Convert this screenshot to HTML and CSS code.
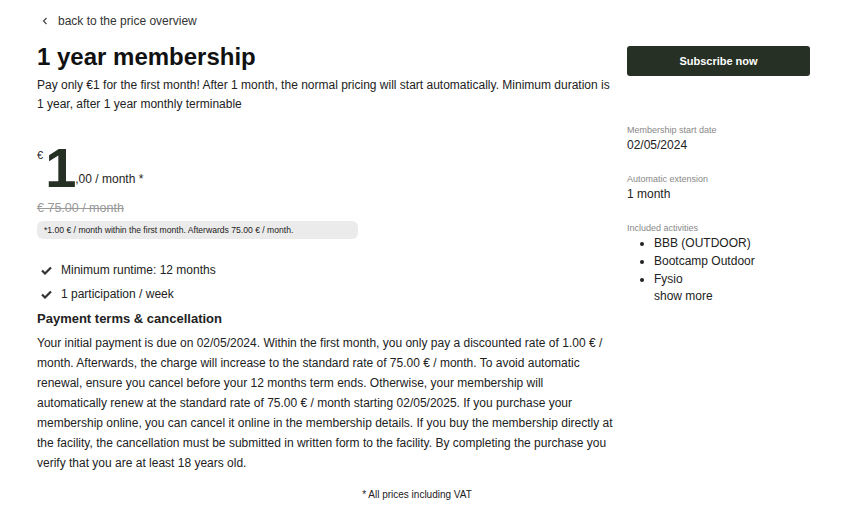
FILE: index.html
```html
<!DOCTYPE html>
<html lang="en">
  <head>
    <meta charset="UTF-8" />
    <title>1 year membership</title>
    <link rel="stylesheet" href="styles.css">
  </head>
  <body>
    <div class="page">
      <div class="main">
        <a class="back" href="#">
          <svg width="8" height="8" viewBox="0 0 8 8"><polyline points="5.5,1 2.5,4 5.5,7" fill="none" stroke="#444" stroke-width="1.2"/></svg>
          back to the price overview
        </a>
        <h1>1 year membership</h1>
        <p class="intro">Pay only €1 for the first month! After 1 month, the normal pricing will start automatically. Minimum duration is 1 year, after 1 year monthly terminable</p>

        <div class="price">
          <span class="cur">€</span>
          <span class="big">1</span>
          <span class="rest">,00 / month *</span>
        </div>
        <div class="old">€ 75.00 / month</div>
        <div class="note">*1.00 € / month within the first month. Afterwards 75.00 € / month.</div>

        <ul class="checks">
          <li>
            <svg width="11" height="9" viewBox="0 0 11 9"><path d="M1 4.5 L4 7.5 L10 1.5" fill="none" stroke="#333" stroke-width="2.2"/></svg>
            Minimum runtime: 12 months
          </li>
          <li>
            <svg width="11" height="9" viewBox="0 0 11 9"><path d="M1 4.5 L4 7.5 L10 1.5" fill="none" stroke="#333" stroke-width="2.2"/></svg>
            1 participation / week
          </li>
        </ul>

        <h2>Payment terms &amp; cancellation</h2>
        <p class="terms">Your initial payment is due on 02/05/2024. Within the first month, you only pay a discounted rate of 1.00 € / month. Afterwards, the charge will increase to the standard rate of 75.00 € / month. To avoid automatic renewal, ensure you cancel before your 12 months term ends. Otherwise, your membership will automatically renew at the standard rate of 75.00 € / month starting 02/05/2025. If you purchase your membership online, you can cancel it online in the membership details. If you buy the membership directly at the facility, the cancellation must be submitted in written form to the facility. By completing the purchase you verify that you are at least 18 years old.</p>
      </div>

      <aside class="side">
        <button type="button">Subscribe now</button>
        <div class="label first">Membership start date</div>
        <div class="value">02/05/2024</div>
        <div class="label">Automatic extension</div>
        <div class="value">1 month</div>
        <div class="label">Included activities</div>
        <ul class="acts">
          <li>BBB (OUTDOOR)</li>
          <li>Bootcamp Outdoor</li>
          <li>Fysio</li>
        </ul>
        <a class="more" href="#">show more</a>
      </aside>
    </div>
    <p class="vat">* All prices including VAT</p>
  </body>
</html>
```

FILE: styles.css
```css
body {
  margin: 0;
  font-family: "Liberation Sans", Arial, sans-serif;
  color: #222;
  background: #fff;
}
.page {
  display: grid;
  grid-template-columns: 1fr 183px;
  gap: 12px;
  padding: 13px 46px 0 37px;
}
.back {
  display: flex;
  align-items: center;
  gap: 9px;
  padding-left: 4px;
  font-size: 12px;
  line-height: 16px;
  color: #333;
  text-decoration: none;
}
h1 {
  margin: 14px 0 5px;
  font-size: 24px;
  line-height: 28px;
  color: #111;
}
.intro {
  margin: 0;
  font-size: 12px;
  line-height: 19px;
}
.price {
  display: flex;
  align-items: flex-start;
  margin-top: 25px;
}
.cur {
  font-size: 11px;
  line-height: 12px;
  margin-top: 10px;
}
.big {
  font-size: 56px;
  font-weight: bold;
  line-height: 57px;
  color: #263024;
  margin: 0 -1px 0 2px;
}
.rest {
  font-size: 12px;
  line-height: 14px;
  margin-top: 33px;
}
.old {
  margin-top: 5px;
  font-size: 12.5px;
  color: #999;
  text-decoration: line-through;
}
.note {
  margin-top: 6px;
  width: 321px;
  box-sizing: border-box;
  padding: 3px 7px;
  background: #ebebeb;
  border-radius: 6px;
  font-size: 8.6px;
  line-height: 12px;
}
.checks {
  list-style: none;
  margin: 19px 0 0;
  padding: 0 0 0 4px;
}
.checks li {
  display: flex;
  align-items: center;
  gap: 9px;
  font-size: 12px;
  line-height: 24px;
}
h2 {
  margin: 3px 0 0;
  font-size: 13px;
  line-height: 20px;
}
.terms {
  margin: 4px 0 0;
  font-size: 12px;
  line-height: 20px;
}
.side {
  padding-top: 33px;
}
.side button {
  width: 100%;
  height: 30px;
  background: #263024;
  color: #fff;
  border: none;
  border-radius: 3px;
  font-family: inherit;
  font-size: 11px;
  font-weight: bold;
  cursor: pointer;
}
.label {
  margin-top: 19px;
  font-size: 9px;
  line-height: 13px;
  color: #888;
}
.label.first {
  margin-top: 48px;
}
.value {
  font-size: 12px;
  line-height: 17px;
}
.acts {
  margin: -1px 0 0;
  padding-left: 27px;
  font-size: 12px;
  line-height: 18px;
}
.more {
  display: block;
  padding-left: 27px;
  font-size: 12px;
  line-height: 17px;
  color: #222;
  text-decoration: none;
}
.vat {
  margin: 16px 0 0;
  padding-right: 22px;
  text-align: center;
  font-size: 10px;
  color: #222;
}
```
